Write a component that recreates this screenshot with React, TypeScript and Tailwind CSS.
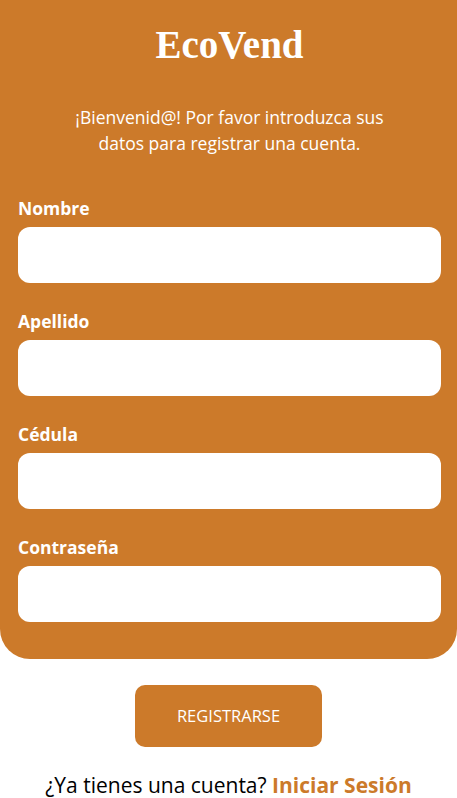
import React from 'react';

const fields = ['Nombre', 'Apellido', 'Cédula', 'Contraseña'];

export default function App() {
  return (
    <div className="min-h-[798px] bg-white font-['Open_Sans',sans-serif]">
      <div className="bg-[#cc7a2a] rounded-b-[30px] pl-[18px] pr-[16px] pt-[22px] pb-[37px]">
        <h1 className="text-center text-white font-bold text-[39px] leading-[46px] font-['Liberation_Serif',serif]">
          EcoVend
        </h1>
        <p className="mt-[36px] text-center text-white text-[17.5px] leading-[26px] px-[44px]">
          ¡Bienvenid@! Por favor introduzca sus datos para registrar una cuenta.
        </p>
        <form className="mt-[40px] flex flex-col gap-[26px]">
          {fields.map((f) => (
            <div key={f} className="flex flex-col">
              <label className="text-white font-bold text-[17.5px] leading-[24px] mb-[7px]">{f}</label>
              <input
                type={f === 'Contraseña' ? 'password' : 'text'}
                className="h-[56px] w-full rounded-[12px] bg-white outline-none px-3"
              />
            </div>
          ))}
        </form>
      </div>
      <div className="flex justify-center mt-[26px]">
        <button className="w-[187px] h-[62px] rounded-[10px] bg-[#cc7a2a] text-white text-[16.5px]">
          REGISTRARSE
        </button>
      </div>
      <p className="mt-[26px] text-center text-[21px] leading-[24px] text-black">
        ¿Ya tienes una cuenta? <a className="text-[#cc7a2a] font-bold">Iniciar Sesión</a>
      </p>
    </div>
  );
}
